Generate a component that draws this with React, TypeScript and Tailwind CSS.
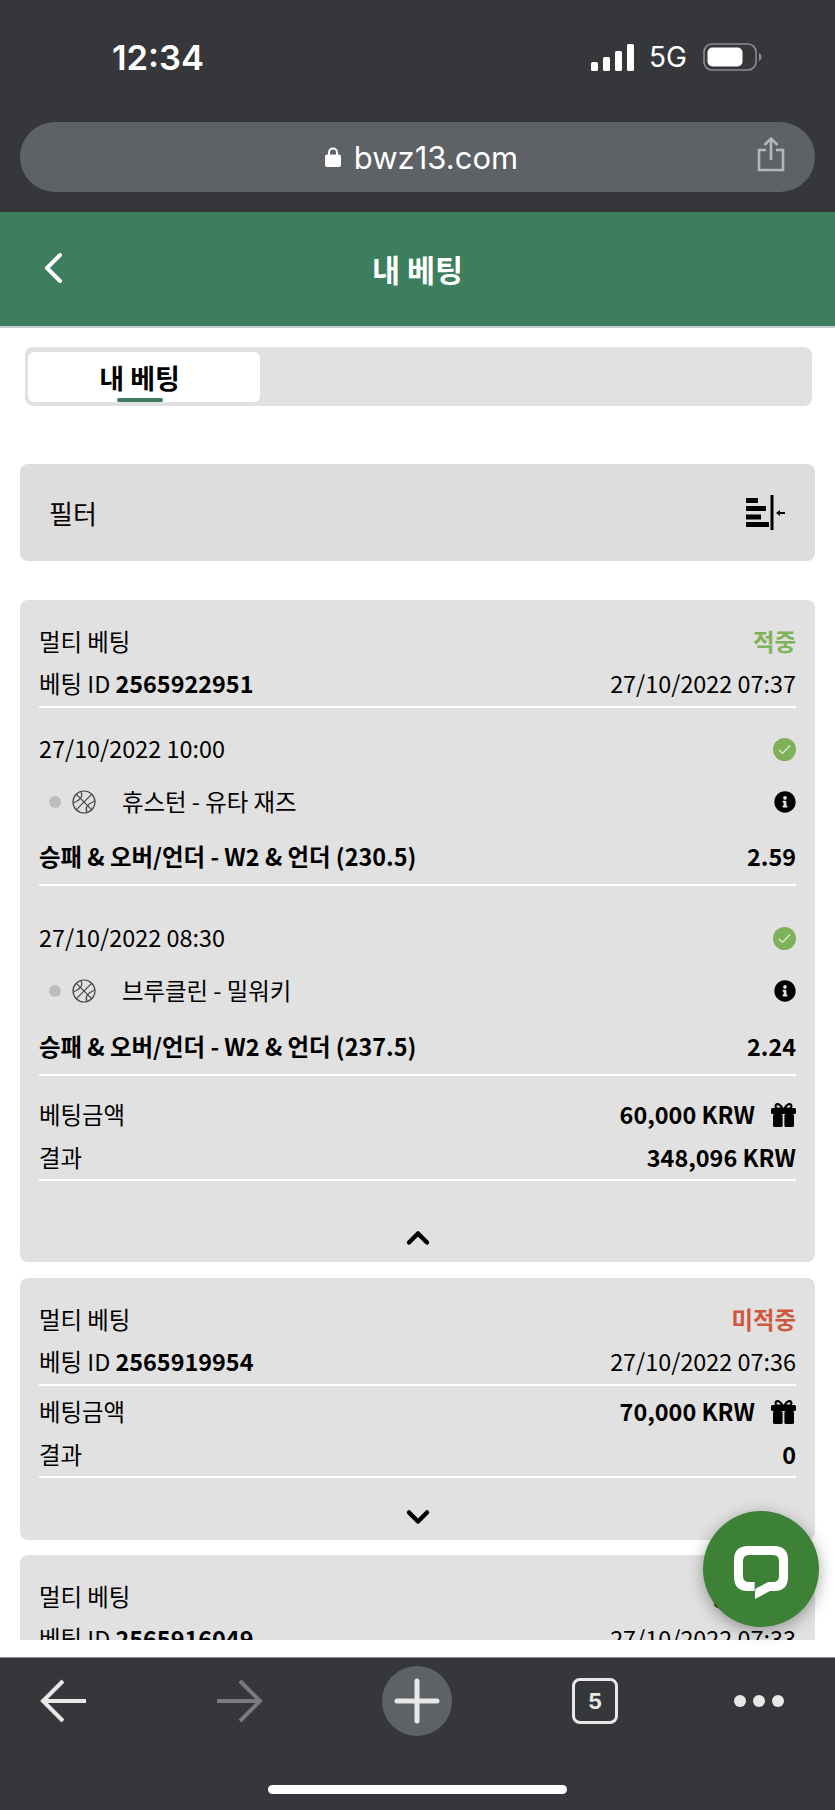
import { ChevronDown, ChevronUp } from "lucide-react";
import { FaInfoCircle } from "react-icons/fa";

const cjk = "font-['Noto_Sans_CJK_KR',sans-serif]";

function Ball() {
    return (
        <svg width="24" height="24" viewBox="0 0 24 24" fill="none" stroke="#444" strokeWidth="1.2">
            <circle cx="12" cy="12" r="11" />
            <path d="M4.2 4.2L19.8 19.8M19.8 4.2L4.2 19.8" />
            <path d="M9 1.4C11 6 9.5 9 4.2 11.5 3 12 2 12.5 1.2 13.5" />
            <path d="M15 22.6C13 18 14.5 15 19.8 12.5 21 12 22 11.5 22.8 10.5" />
        </svg>
    );
}

function Check() {
    return (
        <div className="flex h-[23px] w-[23px] items-center justify-center rounded-full bg-[#7fb15a]">
            <svg width="13" height="11" viewBox="0 0 13 11" fill="none" stroke="#e4eedb" strokeWidth="1.2">
                <path d="M1 6l3.5 3.5L12 1.5" />
            </svg>
        </div>
    );
}

function Gift() {
    return (
        <svg width="25" height="24" viewBox="0 0 25 24" fill="black">
            <path fillRule="evenodd" d="M12.5 5C10.5 1.5 8.5 0 6.5 0 4.5 0 3.5 1.5 3.5 3 3.5 4 4 5 4.5 5.5h16C21 5 21.5 4 21.5 3 21.5 1.5 20.5 0 18.5 0 16.5 0 14.5 1.5 12.5 5ZM6.5 2.2C7.8 2.2 9 3.2 9.8 4.6H7C6 4.6 5.6 4 5.6 3.3 5.6 2.7 6 2.2 6.5 2.2ZM18.5 2.2C19 2.2 19.4 2.7 19.4 3.3 19.4 4 19 4.6 18 4.6H15.2C16 3.2 17.2 2.2 18.5 2.2Z" />
            <rect x="0" y="5" width="25" height="6" rx="1.5" />
            <rect x="2" y="11" width="9.6" height="13" rx="1.5" />
            <rect x="13.4" y="11" width="9.6" height="13" rx="1.5" />
        </svg>
    );
}

function Bet({ date, teams, market, odds, first }: { date: string; teams: string; market: string; odds: string; first?: boolean }) {
    return (
        <div className={first ? "mt-[21px]" : "mt-[32px]"}>
            <div className="flex h-[40px] items-center justify-between">
                <span>{date}</span>
                <Check />
            </div>
            <div className={`flex items-center justify-between ${first ? "h-[65px]" : "h-[66px]"}`}>
                <div className="flex items-center">
                    <span className="ml-[10px] h-[12px] w-[12px] rounded-full bg-[#bdbdbd]" />
                    <span className="ml-[11px]"><Ball /></span>
                    <span className="ml-[26px]">{teams}</span>
                </div>
                <FaInfoCircle className="text-[22px] text-black" />
            </div>
            <div className={`box-content flex items-center justify-between border-b-2 border-white pb-[4px] font-bold ${first ? "h-[46px]" : "h-[46px]"}`}>
                <span>{market}</span>
                <span>{odds}</span>
            </div>
        </div>
    );
}

function Summary({ amount, result }: { amount: string; result: string }) {
    return (
        <div className="border-b-2 border-white">
            <div className="flex h-[44px] items-center justify-between">
                <span>베팅금액</span>
                <span className="flex items-center gap-[16px] font-bold">
                    {amount}
                    <Gift />
                </span>
            </div>
            <div className="flex h-[42px] items-center justify-between">
                <span>결과</span>
                <span className="font-bold">{result}</span>
            </div>
        </div>
    );
}

function CardHead({ status, statusColor, id, date }: { status: string; statusColor: string; id: string; date: string }) {
    return (
        <div className="border-b-2 border-white pt-[21px]">
            <div className="flex h-[41px] items-center justify-between">
                <span>멀티 베팅</span>
                <span className={`font-bold ${statusColor}`}>{status}</span>
            </div>
            <div className="flex h-[44px] items-center justify-between">
                <span>베팅 ID <b className="font-bold">{id}</b></span>
                <span>{date}</span>
            </div>
        </div>
    );
}

export default function App() {
    return (
        <div className={`flex h-[1810px] w-[835px] flex-col overflow-hidden bg-white text-[23.4px] leading-none text-black ${cjk}`}>
            {/* Phone status bar and address bar */}
            <div className="h-[212px] shrink-0 bg-[#36373a] font-['Inter',sans-serif] text-white">
                <div className="flex h-[122px] justify-between pl-[112px] pr-[73px] pt-[39px]">
                    <span className="text-[34.5px] font-semibold leading-[38px]">12:34</span>
                    <div className="-mt-px flex h-[38px] items-center">
                        <svg width="43" height="27" viewBox="0 0 43 27" fill="white">
                            <rect x="0" y="18" width="7" height="9" rx="1.5" />
                            <rect x="12" y="13" width="7" height="14" rx="1.5" />
                            <rect x="24" y="7" width="7" height="20" rx="1.5" />
                            <rect x="36" y="0" width="7" height="27" rx="1.5" />
                        </svg>
                        <span className="ml-[15px] text-[28px] leading-none">5G</span>
                        <svg className="ml-[16px]" width="59" height="28" viewBox="0 0 59 28" fill="none">
                            <rect x="1" y="1" width="52" height="26" rx="8" stroke="#8c8d90" strokeWidth="1.6" />
                            <rect x="4.5" y="4.5" width="35" height="19" rx="5" fill="white" />
                            <path d="M56 10c2 1 2.5 2.5 2.5 4s-.5 3-2.5 4z" fill="#8c8d90" />
                        </svg>
                    </div>
                </div>
                <div className="relative mx-[20px] flex h-[70px] items-center justify-center rounded-full bg-[#5e6166] pl-[8px]">
                    <svg width="16" height="20" viewBox="0 0 16 20" fill="white">
                        <path d="M3 8V5.5a5 5 0 0110 0V8h-2V5.5a3 3 0 00-6 0V8z" />
                        <rect x="0" y="7.5" width="16" height="12.5" rx="2" />
                    </svg>
                    <span className="ml-[13px] text-[31px] leading-none">bwz13.com</span>
                    <svg className="absolute right-[30px] top-[15px]" width="28" height="35" viewBox="0 0 28 35" fill="none" stroke="#b4b6b9" strokeWidth="2.6">
                        <path d="M9 13H2v20h24V13h-7" />
                        <path d="M14 23V2M7.5 8L14 1.5 20.5 8" />
                    </svg>
                </div>
            </div>

            {/* Site header */}
            <div className="relative flex h-[116px] shrink-0 items-center justify-center border-b-2 border-[#c9cbca] bg-[#3c7e5e]">
                <svg className="absolute left-[43px] top-[40px]" width="20" height="32" viewBox="0 0 20 32" fill="none" stroke="white" strokeWidth="4" strokeLinecap="round" strokeLinejoin="round">
                    <path d="M17 3L4 16l13 13" />
                </svg>
                <span className="text-[30.5px] font-bold text-white">내 베팅</span>
            </div>

            {/* Scrolling content */}
            <div className="h-[1312px] shrink-0 overflow-hidden px-[20px]">
                <div className="ml-[5px] mr-[3px] mt-[19px] h-[59px] rounded-lg bg-[#e1e1e1] pl-[3px] pt-[5px]">
                    <div className="relative flex h-[50px] w-[232px] items-center justify-center rounded-md bg-white pr-[9px] text-[27px] font-bold">
                        내 베팅
                        <span className="absolute bottom-0 left-[89px] h-[4px] w-[46px] rounded-sm bg-[#3c7e5e]" />
                    </div>
                </div>

                <div className="mt-[58px] flex h-[97px] items-center justify-between rounded-lg bg-[#dedcdc] pl-[29px] pr-[29px] text-[26px]">
                    <span>필터</span>
                    <svg width="40" height="35" viewBox="0 0 40 35" fill="black">
                        <rect x="0" y="3" width="12" height="5" />
                        <rect x="0" y="11" width="20" height="5" />
                        <rect x="0" y="19.5" width="15" height="5" />
                        <rect x="0" y="27" width="23" height="5" />
                        <rect x="24.5" y="0" width="3" height="35" />
                        <path d="M30 18l4-3v2h5v2h-5v2z" />
                    </svg>
                </div>

                <div className="mt-[39px] h-[662px] rounded-lg bg-[#e1e1e1] px-[19px]">
                    <CardHead status="적중" statusColor="text-[#7eb35a]" id="2565922951" date="27/10/2022 07:37" />
                    <Bet first date="27/10/2022 10:00" teams="휴스턴 - 유타 재즈" market="승패 & 오버/언더 - W2 & 언더 (230.5)" odds="2.59" />
                    <Bet date="27/10/2022 08:30" teams="브루클린 - 밀워키" market="승패 & 오버/언더 - W2 & 언더 (237.5)" odds="2.24" />
                    <div className="mt-[17px]">
                        <Summary amount="60,000 KRW" result="348,096 KRW" />
                    </div>
                    <div className="mt-[39px] flex justify-center">
                        <ChevronUp size={36} strokeWidth={3} />
                    </div>
                </div>

                <div className="mt-[16px] h-[262px] rounded-lg bg-[#e1e1e1] px-[19px]">
                    <CardHead status="미적중" statusColor="text-[#d0573f]" id="2565919954" date="27/10/2022 07:36" />
                    <div className="mt-[4px]">
                        <Summary amount="70,000 KRW" result="0" />
                    </div>
                    <div className="mt-[21px] flex justify-center">
                        <ChevronDown size={36} strokeWidth={3} />
                    </div>
                </div>

                <div className="mt-[15px] h-[262px] rounded-lg bg-[#e1e1e1] px-[19px]">
                    <CardHead status="정산대기" statusColor="text-black" id="2565916049" date="27/10/2022 07:33" />
                </div>
            </div>

            <div className="h-[17px] shrink-0 bg-white" />

            {/* Browser toolbar */}
            <div className="relative flex h-[153px] shrink-0 items-start border-t border-[#8a8a8a] bg-[#36373a] pl-[39px] pt-[8px]">
                <svg className="mt-[13px]" width="48" height="44" viewBox="0 0 48 44" fill="none" stroke="#e8e8e8" strokeWidth="4">
                    <path d="M47 22H4M24 2L4 22l20 20" />
                </svg>
                <svg className="ml-[129px] mt-[13px]" width="48" height="44" viewBox="0 0 48 44" fill="none" stroke="#7a7b7d" strokeWidth="4">
                    <path d="M1 22h43M24 2l20 20-20 20" />
                </svg>
                <div className="ml-[118px] flex h-[70px] w-[70px] items-center justify-center rounded-full bg-[#5e6166]">
                    <svg width="46" height="46" viewBox="0 0 46 46" stroke="#e8e8e8" strokeWidth="5" strokeLinecap="round">
                        <path d="M23 3v40M3 23h40" />
                    </svg>
                </div>
                <div className="ml-[120px] mt-[12px] flex h-[46px] w-[46px] items-center justify-center rounded-lg border-[3px] border-[#e8e8e8] font-['Inter',sans-serif] text-[22px] font-bold text-[#e8e8e8]">
                    5
                </div>
                <div className="ml-[116px] mt-[29px] flex gap-[7px]">
                    <span className="h-[12px] w-[12px] rounded-full bg-[#e8e8e8]" />
                    <span className="h-[12px] w-[12px] rounded-full bg-[#e8e8e8]" />
                    <span className="h-[12px] w-[12px] rounded-full bg-[#e8e8e8]" />
                </div>
                <div className="absolute bottom-[16px] left-[268px] h-[9px] w-[299px] rounded-full bg-white" />
            </div>

            {/* Chat button */}
            <div className="absolute left-[703px] top-[1511px] flex h-[116px] w-[116px] items-center justify-center rounded-full bg-[#3d8136] shadow-[0_4px_16px_rgba(0,0,0,0.35)]">
                <svg className="mt-[8px]" width="54" height="54" viewBox="0 0 54 54" fill="white">
                    <path fillRule="evenodd" d="M14 0H40Q54 0 54 14V31Q54 45 40 45H36L21 53V45H14Q0 45 0 31V14Q0 0 14 0ZM15 9H39Q45 9 45 15V30Q45 36 39 36H34L21 43V36H15Q9 36 9 30V15Q9 9 15 9Z" />
                    <path d="M21 36V45" stroke="#3d8136" strokeWidth="0.8" />
                </svg>
            </div>
        </div>
    );
}
